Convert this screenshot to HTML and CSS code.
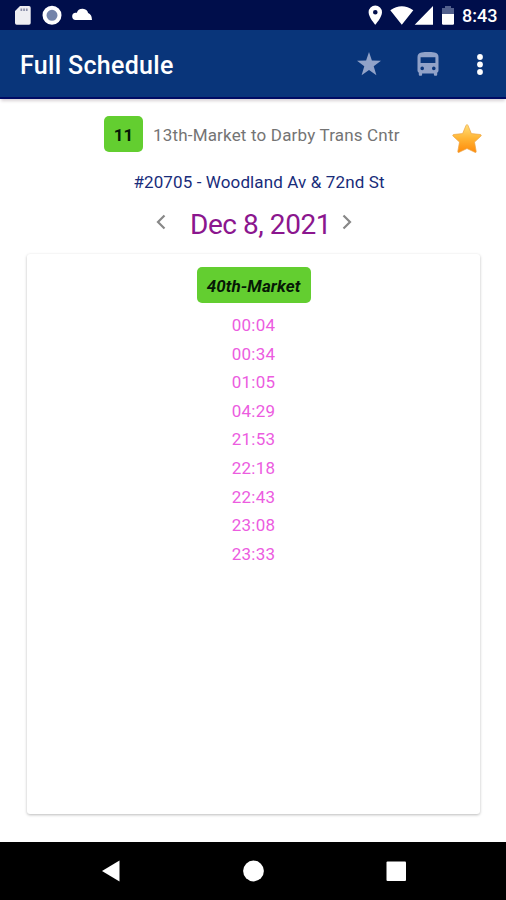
FILE: index.html
```html
<!DOCTYPE html>
<html lang="en">
<head>
<meta charset="utf-8">
<title>Full Schedule</title>
<link rel="stylesheet" href="styles.css">
</head>
<body>
<div class="screen">
  <div class="status">
    <svg class="status-left" width="100" height="30" viewBox="0 0 100 30">
      <path fill="#eeeef2" d="M20 6h9a1.700 1.700 0 0 1 1.700 1.700v15.300a1.700 1.700 0 0 1-1.700 1.700H16.700a1.700 1.700 0 0 1-1.700-1.700V11z"/>
      <path fill="#8b8fa8" d="M20.500 8.500h1.700v2.500h-1.700zm2.700 0h1.700v2.500h-1.700zm2.700 0h1.700v2.500h-1.700z"/>
      <circle cx="52" cy="15.300" r="7.500" fill="#7484aa" stroke="#fff" stroke-width="4"/>
      <path fill="#fff" d="M75.500 20a3.700 3.700 0 0 1-.4-7.300h1.800q1-4.200 6-4 4.300.3 5.200 4.300 3.900 1.400 3.900 7z"/>
    </svg>
    <svg class="status-right" width="95" height="30" viewBox="365 0 95 30">
      <path fill="#fff" fill-rule="evenodd" d="M375.300 5.500a6.700 6.700 0 0 1 6.700 6.700c0 5-6.700 12.500-6.700 12.500s-6.700-7.500-6.700-12.500a6.700 6.700 0 0 1 6.700-6.700zm0 4.400a2.300 2.300 0 1 0 0 4.600 2.300 2.300 0 0 0 0-4.600z"/>
      <path fill="#fff" d="M390.300 10.300Q401.800 2.300 413.300 10.300L401.800 24.700zM433 6v18.700h-18.300z"/>
      <path fill="#52608d" d="M445 6h6v2h3v6.500h-12V8h3z"/>
      <path fill="#fff" d="M442 14h12v9.500a1.200 1.200 0 0 1-1.200 1.200h-9.600a1.200 1.200 0 0 1-1.200-1.200z"/>
    </svg>
    <span class="clock">8:43</span>
  </div>
  <header class="bar">
    <h1>Full Schedule</h1>
    <svg class="tool star" width="24" height="24" viewBox="0 0 24 24"><path fill="#91a2c8" d="M12 0l2.900 8.600 9.100.1-7.300 5.500 2.700 9L12 18l-7.400 5.200 2.700-9L0 8.700l9.100-.1z"/></svg>
    <svg class="tool bus" width="22" height="24" viewBox="0 0 22 24"><path fill="#91a2c8" fill-rule="evenodd" d="M4.500.5Q11-.8 17.500.5 21.500 1.400 21.500 5v13.500q0 1.200-1.300 2.200v2q0 1-1 1h-1.300q-1 0-1-1v-1.200H5.100v1.200q0 1-1 1H2.800q-1 0-1-1v-2Q.5 19.700.5 18.500V5Q.5 1.400 4.500.5zM3.600 5.300v5.600h14.800V5.300zM5.200 14.600a1.800 1.800 0 1 0 0 3.600 1.800 1.800 0 0 0 0-3.600zm11.600 0a1.800 1.800 0 1 0 0 3.600 1.800 1.800 0 0 0 0-3.600z"/></svg>
    <svg class="tool more" width="8" height="24" viewBox="0 0 8 24" fill="#fff"><circle cx="4" cy="5" r="2.900"/><circle cx="4" cy="12.500" r="2.900"/><circle cx="4" cy="20" r="2.900"/></svg>
  </header>
  <main>
    <div class="route">
      <span class="number">11</span>
      <span class="route-name">13th-Market to Darby Trans Cntr</span>
      <svg class="favorite" width="30" height="30" viewBox="0 0 30 30">
        <defs><linearGradient id="gold" x1="0" y1="0" x2="0" y2="1"><stop offset="0" stop-color="#ffe07a"/><stop offset=".5" stop-color="#ffb434"/><stop offset="1" stop-color="#ff8b0b"/></linearGradient></defs>
        <path fill="url(#gold)" stroke="#eda344" stroke-width=".7" stroke-linejoin="round" d="M14 1.500q1-2 2 0l3.400 8.100 9 .9q1.500.5.400 1.700l-6.300 5.900 1.700 9.300q.1 1.500-1.300.9L15 24.500l-7.900 3.800q-1.400.6-1.300-.9l1.700-9.300-6.300-5.900q-1.100-1.200.4-1.700l9-.9z"/>
      </svg>
    </div>
    <div class="stop">#20705 - Woodland Av &amp; 72nd St</div>
    <div class="date">
      <svg width="10" height="16" viewBox="0 0 10 16"><path d="M8.500 1.500L2 8l6.500 6.500"/></svg>
      <span class="day">Dec 8, 2021</span>
      <svg width="10" height="16" viewBox="0 0 10 16"><path d="M1.500 1.500L8 8l-6.500 6.500"/></svg>
    </div>
    <section class="card">
      <div class="direction">40th-Market</div>
      <ul class="times">
        <li>00:04</li><li>00:34</li><li>01:05</li><li>04:29</li><li>21:53</li><li>22:18</li><li>22:43</li><li>23:08</li><li>23:33</li>
      </ul>
    </section>
  </main>
  <nav class="navigation">
    <svg width="506" height="58" viewBox="0 0 506 58" fill="#fff"><path d="M102 29l17.500-10.500v21z"/><circle cx="253.500" cy="29" r="10.400"/><rect x="386.500" y="19.500" width="19.500" height="19.500" rx="1"/></svg>
  </nav>
</div>
</body>
</html>
```
FILE: styles.css
```css
* { box-sizing: border-box; }
body { margin: 0; font-family: Roboto, sans-serif; background: #fff; }
svg { display: block; flex: none; }
.screen { width: 506px; height: 900px; display: flex; flex-direction: column; overflow: hidden; }
.status { height: 30px; flex: none; display: flex; align-items: center; background: #000e4b; color: #fff; }
.status-right { margin-left: 265px; }
.clock { margin-left: 2px; width: 40px; font-size: 18px; font-weight: 500; line-height: 30px; white-space: nowrap; padding-top: 2px; }
.bar { height: 69px; flex: none; display: flex; align-items: center; background: #09357a; border-bottom: 2px solid #000b64; box-shadow: 0 3px 3px -1px #d8d2d6; color: #fff; padding: 0 22px 0 20px; }
h1 { margin: 4px 0 0; width: 337px; font-size: 25px; font-weight: 500; letter-spacing: .32px; line-height: 32px; white-space: nowrap; }
.bus { margin-left: 36px; }
.more { margin-left: 37px; }
main { flex: 1; min-height: 0; padding: 17px 27px 0; }
.route { display: flex; align-items: center; height: 36px; margin-right: -8px; padding-left: 77px; }
.number { flex: none; width: 39px; height: 36px; border-radius: 5px; background: #63ce30; color: #061806; font-size: 17px; font-weight: 700; line-height: 38px; text-align: center; }
.route-name { flex: none; margin-left: 10px; width: 246px; color: #747474; font-size: 17px; letter-spacing: .18px; line-height: 36px; padding-top: 2px; white-space: nowrap; }
.favorite { margin: 10px 0 0 53px; }
.stop { margin-top: 18px; text-align: center; padding-left: 12px; color: #182c7a; font-size: 17px; letter-spacing: .12px; line-height: 24px; white-space: nowrap; }
.date { height: 50px; display: flex; align-items: center; padding: 5px 0 0 129px; }
.date path { fill: none; stroke: #888; stroke-width: 2.200; }
.day { width: 140px; margin: 6px 12px 0 24px; color: #8b168e; font-size: 28px; letter-spacing: -.45px; line-height: 36px; white-space: nowrap; }
.card { margin-top: 10px; height: 560px; width: 453px; background: #fff; border-radius: 3px; box-shadow: 0 1px 3px #bbb; padding-top: 13px; }
.direction { width: 114px; height: 36px; margin: 0 auto; border-radius: 5px; background: #63ce30; color: #061806; font-size: 17px; font-weight: 700; font-style: italic; letter-spacing: .1px; line-height: 38px; text-align: center; white-space: nowrap; }
.times { list-style: none; margin: 8px 0 0; padding: 0; text-align: center; color: #ec5cdf; font-size: 17px; letter-spacing: .22px; line-height: 28.600px; }
.navigation { height: 58px; flex: none; background: #000; }
```
